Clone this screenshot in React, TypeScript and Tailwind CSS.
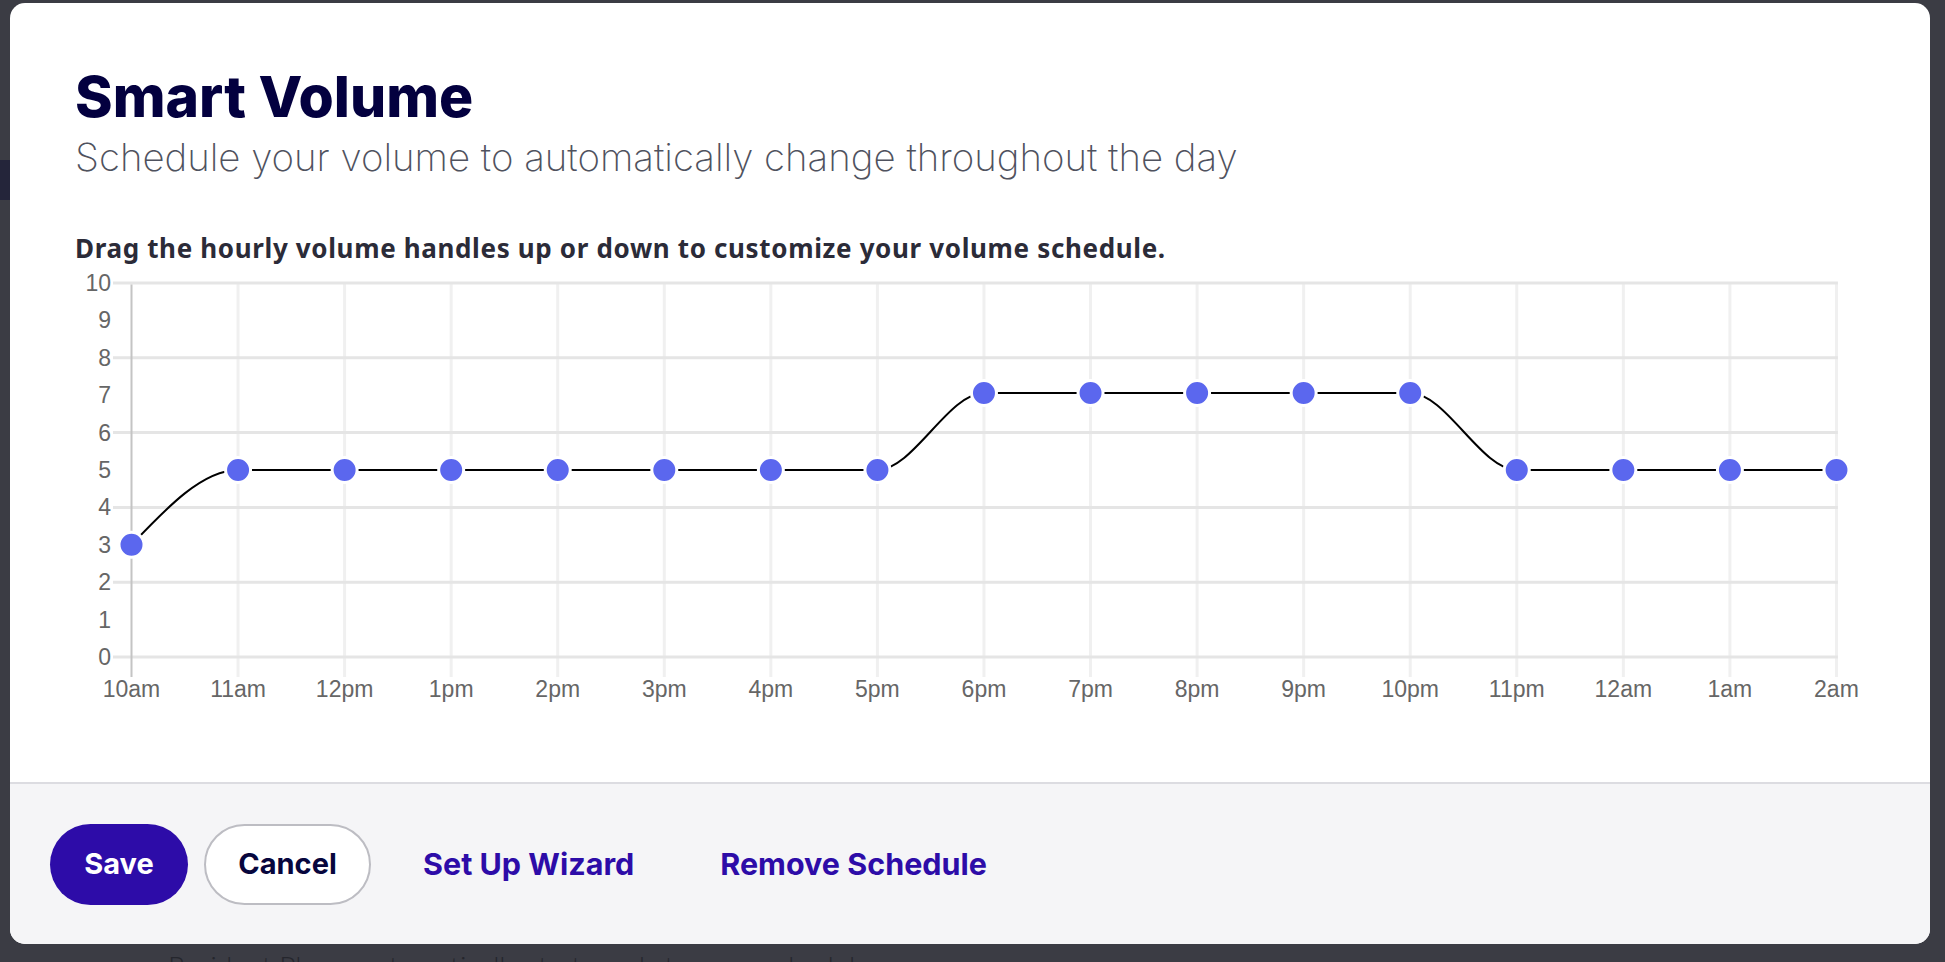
import React from 'react'

const hours = ['10am', '11am', '12pm', '1pm', '2pm', '3pm', '4pm', '5pm', '6pm', '7pm', '8pm', '9pm', '10pm', '11pm', '12am', '1am', '2am']
const levels = [3, 5, 5, 5, 5, 5, 5, 5, 7.06, 7.06, 7.06, 7.06, 7.06, 5, 5, 5, 5]

// chart geometry (svg coords)
const X0 = 56.5
const STEP = 106.56
const Y0 = 15
const UNIT = 37.4
const px = (i: number) => X0 + i * STEP
const py = (v: number) => Y0 + (10 - v) * UNIT
const LAST = px(hours.length - 1)

const sign = (x: number) => (x < 0 ? -1 : 1)

// same idea as d3 curveMonotoneX
function monotonePath(pts: [number, number][]) {
  const n = pts.length
  const t: number[] = new Array(n).fill(0)
  for (let i = 1; i < n - 1; i++) {
    const [x0, y0] = pts[i - 1]
    const [x1, y1] = pts[i]
    const [x2, y2] = pts[i + 1]
    const h0 = x1 - x0
    const h1 = x2 - x1
    const s0 = (y1 - y0) / h0
    const s1 = (y2 - y1) / h1
    const p = (s0 * h1 + s1 * h0) / (h0 + h1)
    t[i] = (sign(s0) + sign(s1)) * Math.min(Math.abs(s0), Math.abs(s1), 0.5 * Math.abs(p)) || 0
  }
  const slope2 = (a: [number, number], b: [number, number], tt: number) => {
    const h = b[0] - a[0]
    return h ? (3 * (b[1] - a[1]) / h - tt) / 2 : tt
  }
  t[0] = slope2(pts[0], pts[1], t[1])
  t[n - 1] = slope2(pts[n - 2], pts[n - 1], t[n - 2])
  let d = `M${pts[0][0]},${pts[0][1]}`
  for (let i = 0; i < n - 1; i++) {
    const [xa, ya] = pts[i]
    const [xb, yb] = pts[i + 1]
    const h = (xb - xa) / 3
    d += ` C${xa + h},${ya + h * t[i]} ${xb - h},${yb - h * t[i + 1]} ${xb},${yb}`
  }
  return d
}

function VolumeChart() {
  const pts = levels.map((v, i) => [px(i), py(v)] as [number, number])
  return (
    <svg width="1800" height="440" viewBox="0 0 1800 440" className="mt-[7px] block">
      {/* vertical grid */}
      {hours.map((_, i) =>
        i === 0 ? null : (
          <line key={'v' + i} x1={px(i)} x2={px(i)} y1={py(10) + 1} y2={py(0) + 20} stroke="#f0f0f0" strokeWidth="3" />
        )
      )}
      {/* horizontal grid, every 2 */}
      {[0, 2, 4, 6, 8, 10].map((v) => (
        <line key={'h' + v} x1={38} x2={LAST + 1.5} y1={py(v)} y2={py(v)} stroke="#e5e5e5" strokeWidth="3" />
      ))}
      {/* y axis */}
      <line x1={px(0)} x2={px(0)} y1={py(10) + 1.5} y2={py(0) + 20} stroke="#c4c4c4" strokeWidth="2" />
      {/* y labels */}
      {Array.from({ length: 11 }, (_, v) => (
        <text key={'yl' + v} x={36} y={py(v) + 8} textAnchor="end" fontSize="23" fill="#666666" fontFamily="'Liberation Sans', Arial, sans-serif">
          {v}
        </text>
      ))}
      {/* x labels */}
      {hours.map((h, i) => (
        <text key={'xl' + h} x={px(i)} y={429} textAnchor="middle" fontSize="23" fill="#666666" fontFamily="'Liberation Sans', Arial, sans-serif">
          {h}
        </text>
      ))}
      <path d={monotonePath(pts)} fill="none" stroke="#000000" strokeWidth="2" />
      {pts.map(([x, y], i) => (
        <circle key={'c' + i} cx={x} cy={y} r="12.5" fill="#5b67ee" stroke="#ffffff" strokeWidth="3" />
      ))}
    </svg>
  )
}

export default function App() {
  return (
    <div className="relative h-[962px] w-full overflow-hidden bg-[#3b3c44]">
      {/* page behind the overlay */}
      <div className="flex flex-col pt-[160px] text-[#2a2b33]">
        <div className="h-[40px] w-[40px] bg-[#24253a]" />
        <div className="mt-[752px] pl-[168px] font-['Lato',sans-serif] text-[28px] font-light leading-none text-[#25262d]">
          Resident Player automatically starts and stops on schedule
        </div>
      </div>

      {/* modal */}
      <div className="absolute left-[10px] top-[3px] flex h-[941px] w-[1920px] flex-col rounded-[15px] bg-white">
        <div className="flex flex-1 flex-col pl-[65px] pt-[65px]">
          <h1 className="font-['Inter',sans-serif] text-[57px] font-extrabold leading-none text-[#03003f]">
            Smart Volume
          </h1>
          <p className="mt-[13px] font-['Inter',sans-serif] text-[38.4px] font-extralight leading-none text-[#4f525e]">
            Schedule your volume to automatically change throughout the day
          </p>
          <p className="mt-[59px] font-['Noto_Sans',sans-serif] text-[26px] font-bold leading-none tracking-[0.65px] text-[#2b2b38]">
            Drag the hourly volume handles up or down to customize your volume schedule.
          </p>
          <VolumeChart />
        </div>
        <div className="flex h-[162px] items-center rounded-b-[15px] border-t-2 border-[#dcdce1] bg-[#f5f5f7] pl-[40px] font-['Inter',sans-serif] text-[29px] font-bold">
          <button className="h-[81px] w-[138px] rounded-full bg-[#2d0ca8] text-white">Save</button>
          <button className="ml-[16px] h-[81px] w-[167px] rounded-full border-2 border-[#bdbdc3] bg-white text-[#07063d]">
            Cancel
          </button>
          <button className="ml-[52px] text-[30.5px] text-[#2d0ca8]">Set Up Wizard</button>
          <button className="ml-[86px] text-[30.5px] text-[#2d0ca8]">Remove Schedule</button>
        </div>
      </div>
    </div>
  )
}
